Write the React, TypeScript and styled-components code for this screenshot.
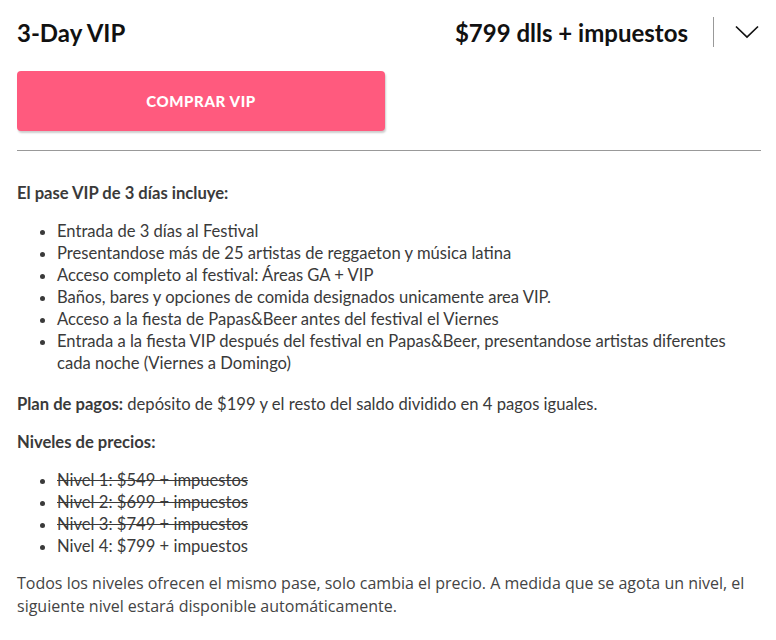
import styled, { createGlobalStyle } from 'styled-components';

const GlobalStyle = createGlobalStyle`
  html, body {
    margin: 0;
    padding: 0;
    background: #fff;
  }
  body {
    font-family: Lato, 'Noto Sans', sans-serif;
    color: #333;
  }
`;

const Panel = styled.div`
  width: 744px;
  padding: 0 15px 0 17px;
`;

const Header = styled.div`
  display: flex;
  align-items: center;
  height: 64px;
`;

const Title = styled.h2`
  flex: 1;
  margin: 0;
  font-size: 24px;
  font-weight: 700;
  color: #111;
`;

const Price = styled.span`
  font-size: 24px;
  font-weight: 700;
  color: #111;
`;

const VDivider = styled.span`
  width: 1px;
  height: 30px;
  background: #999;
  margin: 0 20px 0 25px;
`;

const Toggle = styled.button`
  display: flex;
  align-items: center;
  justify-content: center;
  width: 26px;
  height: 26px;
  padding: 0;
  border: 0;
  background: none;
  margin-right: 1px;
`;

const BuyButton = styled.button`
  display: block;
  width: 368px;
  height: 60px;
  margin-top: 7px;
  border: 0;
  border-radius: 4px;
  background: #ff5a7e;
  box-shadow: 1px 2px 2px rgba(0, 0, 0, 0.2);
  color: #fff;
  font-family: Lato, sans-serif;
  font-size: 15px;
  font-weight: 900;
  letter-spacing: 0.6px;
`;

const Rule = styled.hr`
  margin: 19px 0 0;
  border: 0;
  border-top: 1px solid #999;
`;

const Body = styled.div`
  font-size: 16.6px;
  line-height: 22px;
  padding-top: 31px;
  color: #3a3a3a;
`;

const Para = styled.p`
  margin: 0 0 16px;
`;

const List = styled.ul<{ $after: number }>`
  margin: 0 0 ${(p) => p.$after}px;
  padding-left: 40px;
  li {
    margin: 0;
  }
`;

const Struck = styled.li`
  text-decoration: line-through;
`;

const Note = styled.p`
  margin: 0;
  font-family: 'Open Sans', sans-serif;
  font-size: 16px;
  line-height: 23px;
  color: #444;
`;

export default function App() {
  return (
    <>
      <GlobalStyle />
      <Panel>
        <Header>
          <Title>3-Day VIP</Title>
          <Price>$799 dlls + impuestos</Price>
          <VDivider />
          <Toggle aria-label="expand">
            <svg width="24" height="14" viewBox="0 0 24 14" fill="none">
              <path d="M1 1.5 L12 12 L23 1.5" stroke="#111" strokeWidth="1.7" />
            </svg>
          </Toggle>
        </Header>
        <BuyButton>COMPRAR VIP</BuyButton>
        <Rule />
        <Body>
          <Para>
            <b>El pase VIP de 3 días incluye:</b>
          </Para>
          <List $after={19}>
            <li>Entrada de 3 días al Festival</li>
            <li>Presentandose más de 25 artistas de reggaeton y música latina</li>
            <li>Acceso completo al festival: Áreas GA + VIP</li>
            <li>Baños, bares y opciones de comida designados unicamente area VIP.</li>
            <li>Acceso a la fiesta de Papas&amp;Beer antes del festival el Viernes</li>
            <li>
              Entrada a la fiesta VIP después del festival en Papas&amp;Beer, presentandose artistas diferentes
              cada noche (Viernes a Domingo)
            </li>
          </List>
          <Para>
            <b>Plan de pagos:</b> depósito de $199 y el resto del saldo dividido en 4 pagos iguales.
          </Para>
          <Para>
            <b>Niveles de precios:</b>
          </Para>
          <List $after={15}>
            <Struck>Nivel 1: $549 + impuestos</Struck>
            <Struck>Nivel 2: $699 + impuestos</Struck>
            <Struck>Nivel 3: $749 + impuestos</Struck>
            <li>Nivel 4: $799 + impuestos</li>
          </List>
          <Note>
            Todos los niveles ofrecen el mismo pase, solo cambia el precio. A medida que se agota un nivel, el
            siguiente nivel estará disponible automáticamente.
          </Note>
        </Body>
      </Panel>
    </>
  );
}
